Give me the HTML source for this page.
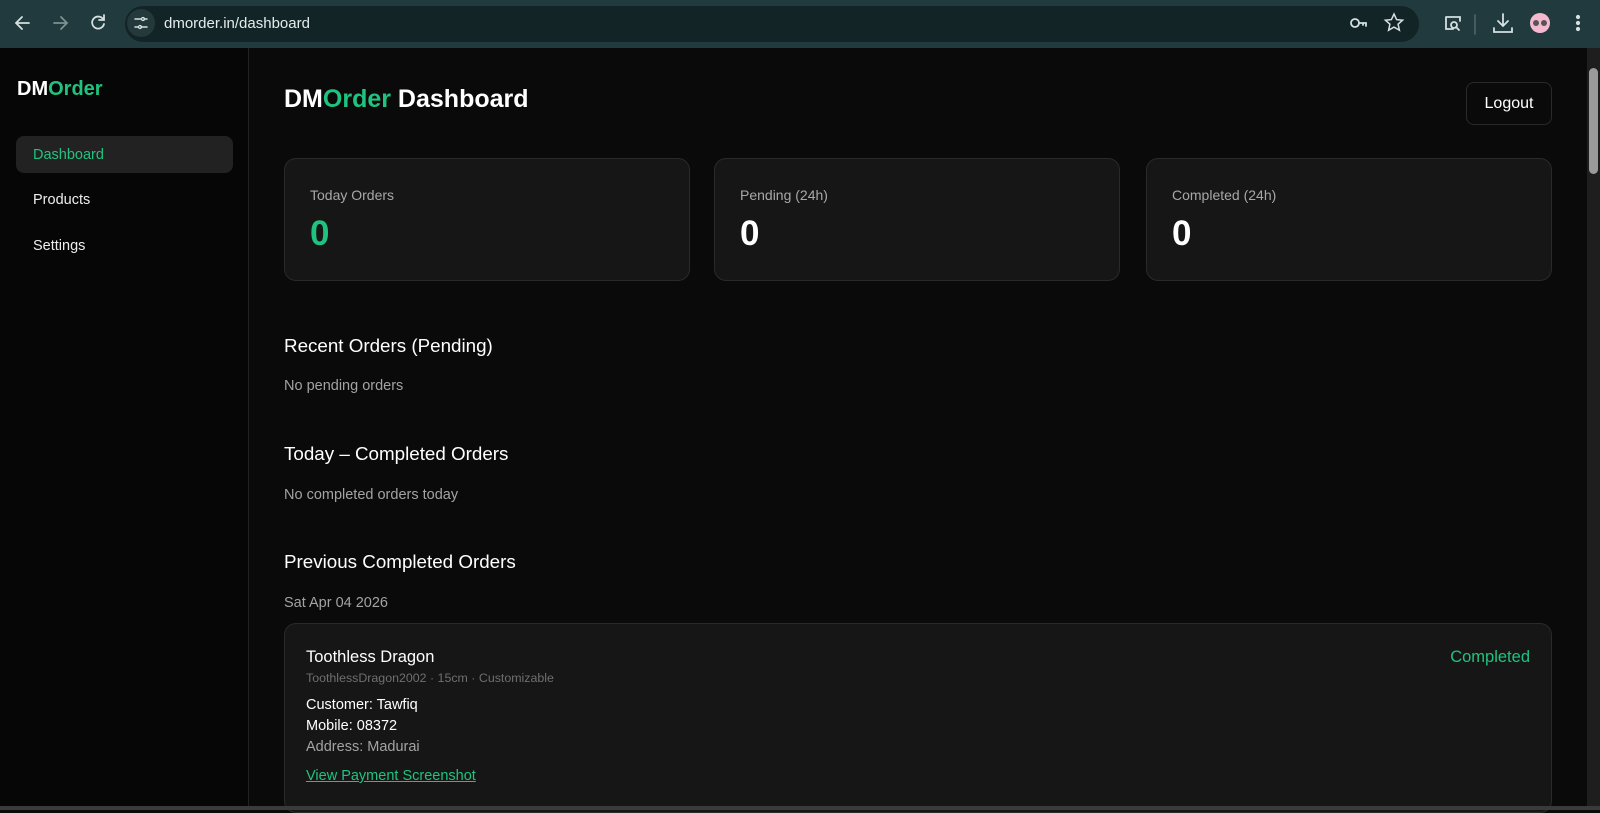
<!DOCTYPE html>
<html><head><style>
*{margin:0;padding:0;box-sizing:border-box}
body{width:1600px;height:810px;overflow:hidden;background:#0a0a0b;font-family:"Liberation Sans",Arial,sans-serif;color:#fff;position:relative}
.abs{position:absolute;white-space:nowrap}
.top{position:absolute;left:0;top:0;width:1600px;height:48px;background:#213a3d}
.url{position:absolute;left:125px;top:6px;width:1294px;height:36px;border-radius:18px;background:#122426}
.side{position:absolute;left:0;top:48px;width:249px;height:762px;background:#060607;border-right:1px solid #222}
.g{color:#1fc37f}
.card{position:absolute;background:#161616;border:1px solid #2a2a2a;border-radius:12px}
.lbl{font-size:14px;color:#a8a8a8}
.num{font-size:35px;font-weight:bold}
h2{position:absolute;font-size:18.8px;font-weight:normal;white-space:nowrap}
.mut{font-size:14.5px;color:#a3a3a3}
</style></head><body>
<div class="top"></div>
<div class="url"></div>
<svg class="abs" style="left:0;top:0" width="1600" height="48" fill="none" stroke="#d5e0e0" stroke-width="1.8" stroke-linecap="round">
<path d="M29 23H16M22 17l-6 6 6 6"/>
<path d="M54 23h13M61 17l6 6-6 6" stroke="#7f9090"/>
<path d="M103 19a6 6 0 1 0 1 5M104 15v5h-5"/>
<circle cx="141" cy="23" r="14" fill="#24393b" stroke="none"/>
<path d="M135 19h6M144 19h3M135 27h3M141 27h6" stroke-width="1.5"/><circle cx="143" cy="19" r="1.5" stroke-width="1.3"/><circle cx="140" cy="27" r="1.5" stroke-width="1.3"/>
<circle cx="1355" cy="23" r="4"/><path d="M1359 23h7v3M1363 23v2"/>
<path d="M1394 14l2.6 5.6 6 .6-4.5 4 1.3 6-5.4-3.1-5.4 3.1 1.3-6-4.5-4 6-.6z" stroke-width="1.5"/>
<path d="M1446 17v12h7M1446 17h14v4" /><circle cx="1454" cy="25" r="3"/><path d="M1456 27l3 3"/>
<path d="M1475 15v19" stroke="#4a6062"/>
<path d="M1503 14v11M1498 21l5 5 5-5M1494 28v4h18v-4"/>
<circle cx="1540" cy="23" r="10" fill="#f4b8cf" stroke="none"/><circle cx="1536" cy="23" r="3" fill="#555" stroke="none"/><circle cx="1544" cy="23" r="3" fill="#555" stroke="none"/>
<circle cx="1578" cy="17" r="1.2" fill="#d5e0e0"/><circle cx="1578" cy="23" r="1.2" fill="#d5e0e0"/><circle cx="1578" cy="29" r="1.2" fill="#d5e0e0"/>
</svg>
<div class="abs" style="left:164px;top:15px;font-size:15px;color:#e4ecec">dmorder.in/dashboard</div>
<div class="side"></div>
<div class="abs" style="left:17px;top:78px;font-size:20px;font-weight:bold">DM<span class="g">Order</span></div>
<div class="abs" style="left:16px;top:136px;width:217px;height:37px;background:#222;border-radius:8px"></div>
<div class="abs g" style="left:33px;top:147px;font-size:14.5px">Dashboard</div>
<div class="abs" style="left:33px;top:192px;font-size:14.5px;color:#eee">Products</div>
<div class="abs" style="left:33px;top:238px;font-size:14.5px;color:#eee">Settings</div>
<div class="abs" style="left:284px;top:85px;font-size:25px;font-weight:bold">DM<span class="g">Order</span> Dashboard</div>
<div class="abs" style="left:1466px;top:82px;width:86px;height:43px;border:1px solid #2a2a2a;border-radius:8px;background:#0a0a0b;font-size:16px;text-align:center;line-height:41px">Logout</div>
<div class="card" style="left:284px;top:158px;width:406px;height:123px"><div class="abs lbl" style="left:25px;top:28px">Today Orders</div><div class="abs num g" style="left:25px;top:55px">0</div></div>
<div class="card" style="left:714px;top:158px;width:406px;height:123px"><div class="abs lbl" style="left:25px;top:28px">Pending (24h)</div><div class="abs num" style="left:25px;top:55px">0</div></div>
<div class="card" style="left:1146px;top:158px;width:406px;height:123px"><div class="abs lbl" style="left:25px;top:28px">Completed (24h)</div><div class="abs num" style="left:25px;top:55px">0</div></div>
<h2 style="left:284px;top:335px">Recent Orders (Pending)</h2>
<div class="abs mut" style="left:284px;top:378px">No pending orders</div>
<h2 style="left:284px;top:443px">Today – Completed Orders</h2>
<div class="abs mut" style="left:284px;top:487px">No completed orders today</div>
<h2 style="left:284px;top:551px">Previous Completed Orders</h2>
<div class="abs mut" style="left:284px;top:595px">Sat Apr 04 2026</div>
<div class="card" style="left:284px;top:623px;width:1268px;height:190px">
<div class="abs" style="left:21px;top:24px;font-size:16.5px">Toothless Dragon</div>
<div class="abs g" style="right:21px;top:24px;font-size:16.5px">Completed</div>
<div class="abs" style="left:21px;top:47px;font-size:12.4px;color:#6f6f6f">ToothlessDragon2002 · 15cm · Customizable</div>
<div class="abs" style="left:21px;top:73px;font-size:14.5px">Customer: Tawfiq</div>
<div class="abs" style="left:21px;top:94px;font-size:14.5px">Mobile: 08372</div>
<div class="abs" style="left:21px;top:115px;font-size:14.5px;color:#a3a3a3">Address: Madurai</div>
<div class="abs g" style="left:21px;top:144px;font-size:14.5px;text-decoration:underline">View Payment Screenshot</div>
</div>
<div class="abs" style="left:1587px;top:48px;width:13px;height:762px;background:#1e1e1e"></div>
<div class="abs" style="left:1589px;top:68px;width:9px;height:106px;background:#9a9a9a;border-radius:5px"></div>
<div class="abs" style="left:0;top:806px;width:1600px;height:4px;background:#3a3a3a"></div>
</body></html>
